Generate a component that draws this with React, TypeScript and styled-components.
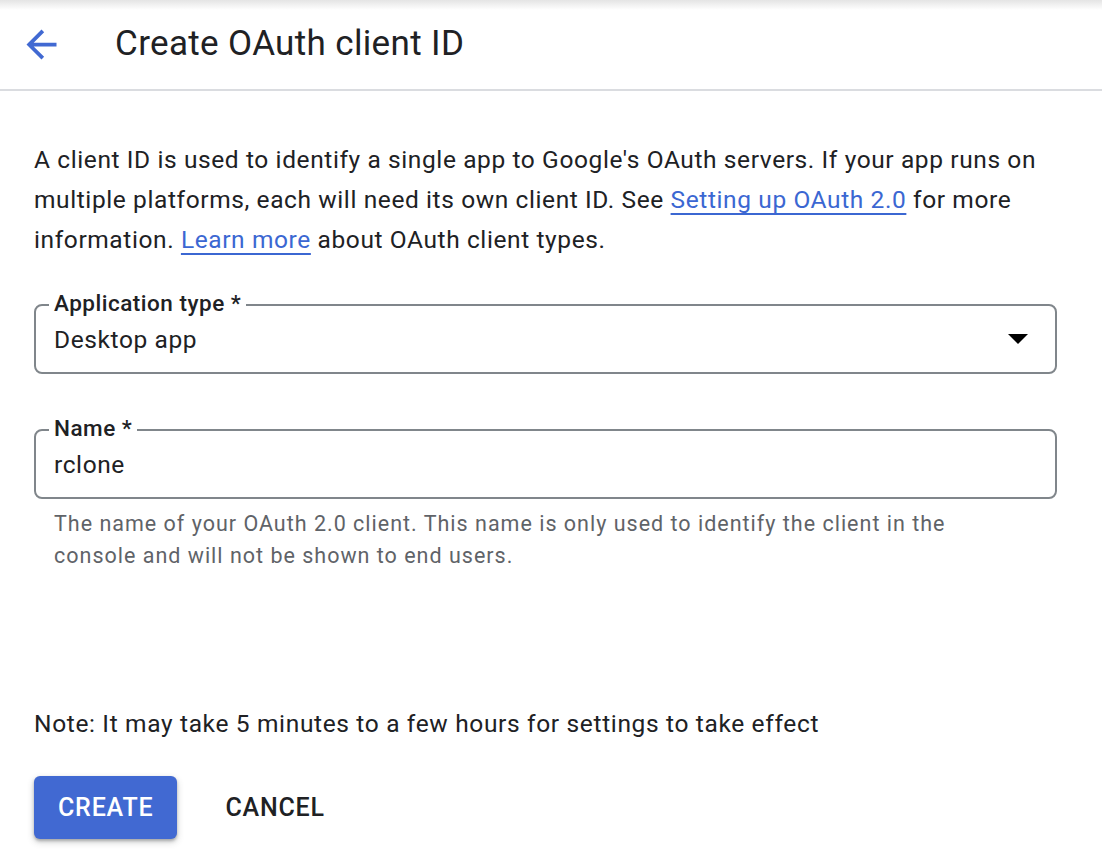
import * as React from 'react';
import styled, { createGlobalStyle } from 'styled-components';

const GlobalStyle = createGlobalStyle`
    html, body {
        margin: 0;
        padding: 0;
        background: #ffffff;
    }
    body {
        font-family: Roboto, 'Liberation Sans', Arial, sans-serif;
        color: #202124;
    }
`;

const Page = styled.div`
    width: 1102px;
    height: 864px;
    overflow: hidden;
    display: flex;
    flex-direction: column;
    background: linear-gradient(to bottom, #e4e4e4 0px, #ffffff 10px);
`;

const Header = styled.header`
    height: 89px;
    display: flex;
    align-items: center;
    gap: 51px;
    padding: 0 0 0 19px;
    border-bottom: 2px solid #dadce0;
    box-sizing: content-box;
`;

const BackButton = styled.button`
    width: 45px;
    height: 45px;
    padding: 0;
    border: none;
    background: none;
    display: flex;
    align-items: center;
    justify-content: center;
    cursor: pointer;
`;

const Title = styled.h1`
    margin: 0 0 3px 0;
    font-size: 35px;
    font-weight: 400;
    color: #202124;
    letter-spacing: 0.35px;
`;

const Body = styled.main`
    display: flex;
    flex-direction: column;
    padding: 49px 45px 0 34px;
`;

const Intro = styled.p`
    margin: 0;
    font-size: 24.5px;
    line-height: 40px;
    letter-spacing: 0.6px;
    color: #202124;
`;

const Link = styled.a`
    color: #3b67d2;
    text-decoration: underline;
    text-underline-offset: 5px;
    text-decoration-thickness: 2px;
`;

const Field = styled.div<{ $top: number }>`
    position: relative;
    margin-top: ${(p) => p.$top}px;
    height: 70px;
    box-sizing: border-box;
    border: 2px solid #80868b;
    border-radius: 8px;
    display: flex;
    align-items: center;
    justify-content: space-between;
    padding: 0 27px 0 18px;
`;

const FieldLabel = styled.label`
    position: absolute;
    top: -17px;
    left: 13px;
    padding: 0 5px;
    background: #ffffff;
    font-size: 22.5px;
    line-height: 28px;
    font-weight: 500;
    letter-spacing: 0.5px;
    color: #202124;
`;

const FieldValue = styled.span`
    font-size: 24.5px;
    letter-spacing: 0.6px;
    color: #202124;
`;

const Caret = styled.span`
    width: 0;
    height: 0;
    border-left: 10px solid transparent;
    border-right: 10px solid transparent;
    border-top: 10px solid #000000;
`;

const Helper = styled.p`
    margin: 9px 0 0 20px;
    font-size: 21.5px;
    line-height: 32px;
    letter-spacing: 1px;
    color: #5f6368;
`;

const Note = styled.p`
    margin: 132px 0 0 0;
    font-size: 24.5px;
    line-height: 40px;
    letter-spacing: 0.65px;
    color: #202124;
`;

const Actions = styled.div`
    display: flex;
    gap: 24px;
    margin-top: 32px;
`;

const Button = styled.button<{ $primary?: boolean }>`
    height: 63px;
    padding: 0 24px;
    border: none;
    border-radius: 6px;
    font-family: Roboto, 'Liberation Sans', Arial, sans-serif;
    font-size: 25px;
    font-weight: 500;
    letter-spacing: 0.8px;
    cursor: pointer;
    background: ${(p) => (p.$primary ? '#4169d2' : 'transparent')};
    color: ${(p) => (p.$primary ? '#ffffff' : '#202124')};
    box-shadow: ${(p) =>
        p.$primary ? '0 2px 3px rgba(60, 64, 67, 0.35), 0 3px 6px 1px rgba(60, 64, 67, 0.18)' : 'none'};
`;

const ArrowIcon = () => (
    <svg width="45" height="45" viewBox="0 0 24 24">
        <path d="M20 11H7.83l5.59-5.59L12 4l-8 8 8 8 1.41-1.41L7.83 13H20v-2z" fill="#4169d2" />
    </svg>
);

const App = () => {
    return (
        <>
            <GlobalStyle />
            <Page>
                <Header>
                    <BackButton aria-label="Back">
                        <ArrowIcon />
                    </BackButton>
                    <Title>Create OAuth client ID</Title>
                </Header>
                <Body>
                    <Intro>
                        A client ID is used to identify a single app to Google's OAuth servers. If your app runs on
                        multiple platforms, each will need its own client ID. See <Link>Setting up OAuth 2.0</Link> for
                        more information. <Link>Learn more</Link> about OAuth client types.
                    </Intro>
                    <Field $top={44}>
                        <FieldLabel>Application type *</FieldLabel>
                        <FieldValue>Desktop app</FieldValue>
                        <Caret />
                    </Field>
                    <Field $top={55}>
                        <FieldLabel>Name *</FieldLabel>
                        <FieldValue>rclone</FieldValue>
                    </Field>
                    <Helper>
                        The name of your OAuth 2.0 client. This name is only used to identify the client in the
                        <br />
                        console and will not be shown to end users.
                    </Helper>
                    <Note>Note: It may take 5 minutes to a few hours for settings to take effect</Note>
                    <Actions>
                        <Button $primary>CREATE</Button>
                        <Button>CANCEL</Button>
                    </Actions>
                </Body>
            </Page>
        </>
    );
};

export default App;
